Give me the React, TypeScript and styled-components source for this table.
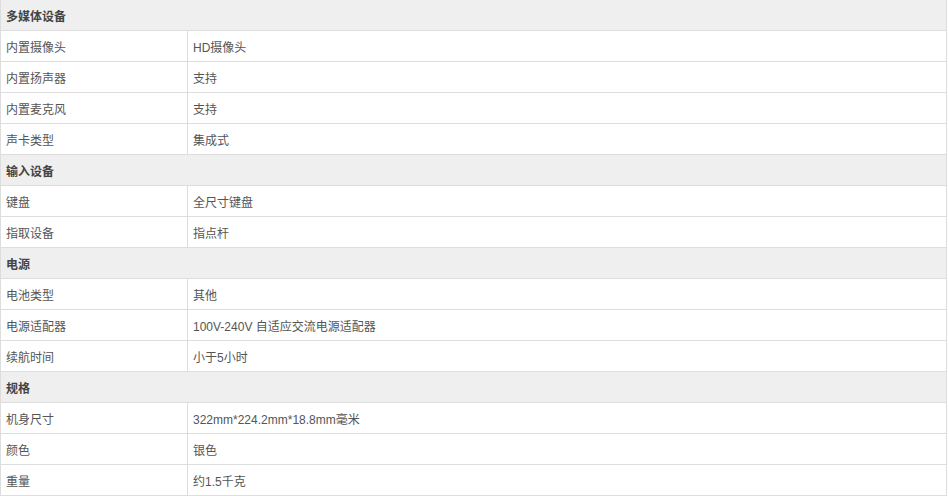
import React from 'react';
import styled, { createGlobalStyle } from 'styled-components';

const GlobalStyle = createGlobalStyle`
  body {
    margin: 0;
    background: #fff;
    font-family: "Liberation Sans", Arial, "Noto Sans CJK SC", sans-serif;
  }
`;

type Section = { title: string; rows: [string, string][] };

const specs: Section[] = [
  {
    title: '多媒体设备',
    rows: [
      ['内置摄像头', 'HD摄像头'],
      ['内置扬声器', '支持'],
      ['内置麦克风', '支持'],
      ['声卡类型', '集成式'],
    ],
  },
  {
    title: '输入设备',
    rows: [
      ['键盘', '全尺寸键盘'],
      ['指取设备', '指点杆'],
    ],
  },
  {
    title: '电源',
    rows: [
      ['电池类型', '其他'],
      ['电源适配器', '100V-240V 自适应交流电源适配器'],
      ['续航时间', '小于5小时'],
    ],
  },
  {
    title: '规格',
    rows: [
      ['机身尺寸', '322mm*224.2mm*18.8mm毫米'],
      ['颜色', '银色'],
      ['重量', '约1.5千克'],
    ],
  },
];

// top border sits just above the visible area in the screenshot
const SpecTable = styled.table`
  width: 947px;
  margin-top: -1px;
  border-collapse: collapse;
  table-layout: fixed;
  font-size: 12px;
  color: #555;
`;

const Row = styled.tr`
  height: 31px;
`;

const HeadCell = styled.td`
  background: #efefef;
  border: 1px solid #dddddd;
  padding: 0 5px;
  font-weight: bold;
  color: #444;
`;

const NameCell = styled.td`
  border: 1px solid #dddddd;
  padding: 0 5px;
`;

const ValueCell = styled.td`
  border: 1px solid #dddddd;
  padding: 0 5px;
`;

const App = () => {
  return (
    <>
      <GlobalStyle />
      <SpecTable>
        <colgroup>
          <col style={{ width: 187 }} />
          <col />
        </colgroup>
        <tbody>
          {specs.map((section) => (
            <React.Fragment key={section.title}>
              <Row>
                <HeadCell colSpan={2}>{section.title}</HeadCell>
              </Row>
              {section.rows.map(([name, value]) => (
                <Row key={name}>
                  <NameCell>{name}</NameCell>
                  <ValueCell>{value}</ValueCell>
                </Row>
              ))}
            </React.Fragment>
          ))}
        </tbody>
      </SpecTable>
    </>
  );
};

export default App;
